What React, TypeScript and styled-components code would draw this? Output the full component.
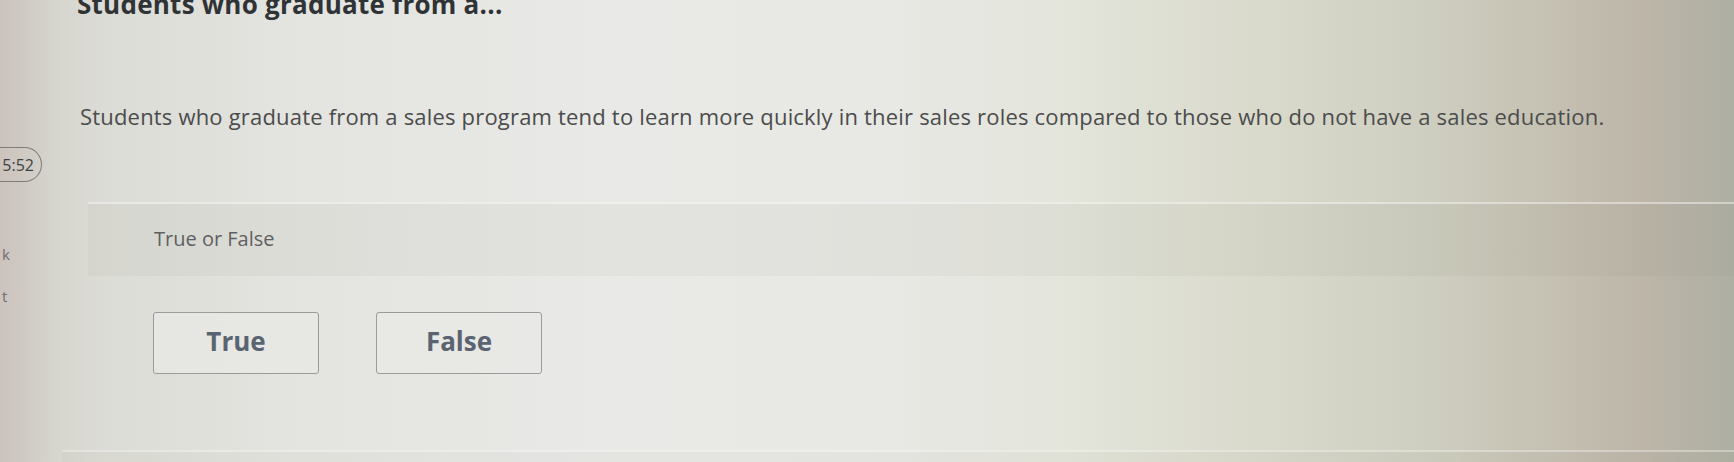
import React from 'react'
import styled, { createGlobalStyle } from 'styled-components'

const GlobalStyle = createGlobalStyle`
  html, body {
    margin: 0;
    padding: 0;
    height: 100%;
  }
  body {
    overflow: hidden;
    font-family: 'Open Sans', 'Liberation Sans', sans-serif;
    background: linear-gradient(
      90deg,
      #cfc8c2 0%,
      #d6d5ce 3%,
      #dcdcd6 6%,
      #e3e3df 16%,
      #e9e9e7 35%,
      #e8e8e4 52%,
      #e3e4da 62%,
      #dadbcd 72%,
      #cfcfc1 82%,
      #c4bfb1 90%,
      #bcb5a8 95%,
      #aeb0a3 100%
    );
  }
`

const Page = styled.div`
  display: flex;
  height: 462px;
  overflow: hidden;
`

const Rail = styled.aside`
  width: 62px;
  flex-shrink: 0;
  display: flex;
  flex-direction: column;
  padding-top: 147px;
  background: linear-gradient(90deg, rgba(190, 170, 165, 0.18), rgba(0, 0, 0, 0));
`

const Timer = styled.div`
  width: 46px;
  height: 35px;
  margin-left: -4px;
  box-sizing: border-box;
  border: 1.5px solid #7d7d7b;
  border-left: none;
  border-radius: 0 18px 18px 0;
  display: flex;
  align-items: center;
  justify-content: flex-end;
  padding-right: 7px;
  font-size: 16px;
  color: #3f4244;
`

const RailLink = styled.span<{ $gap: number }>`
  margin-top: ${p => p.$gap}px;
  padding-left: 2px;
  font-size: 15px;
  color: #6d6f70;
  line-height: 16px;
`

const Main = styled.main`
  flex: 1;
  display: flex;
  flex-direction: column;
`

const Title = styled.h1`
  margin: -11px 0 0 15px;
  font-size: 26px;
  font-weight: 700;
  line-height: 30px;
  color: #303335;
  letter-spacing: 0.25px;
  white-space: nowrap;
`

const Question = styled.p`
  margin: 82px 0 0 18px;
  font-size: 22px;
  line-height: 30px;
  color: #4b4c4c;
  letter-spacing: 0.19px;
  white-space: nowrap;
`

const Band = styled.div`
  margin: 71px 0 0 26px;
  height: 74px;
  box-sizing: border-box;
  display: flex;
  align-items: center;
  padding-left: 66px;
  background: rgba(120, 120, 100, 0.06);
  border-top: 2px solid rgba(255, 255, 255, 0.45);
`

const BandLabel = styled.span`
  font-size: 20px;
  color: #5e6061;
  margin-top: -4px;
`

const Choices = styled.div`
  display: flex;
  gap: 57px;
  margin: 36px 0 0 91px;
`

const Choice = styled.button`
  width: 166px;
  height: 62px;
  border: 1px solid #9a9c9c;
  border-radius: 3px;
  background: rgba(232, 232, 229, 0.75);
  font-family: 'Open Sans', 'Liberation Sans', sans-serif;
  font-size: 26px;
  font-weight: 700;
  color: #5a6470;
  cursor: pointer;
  padding: 0 0 4px;
`

const Footer = styled.div`
  margin-top: auto;
  height: 10px;
  border-top: 2px solid rgba(255, 255, 255, 0.35);
  background: rgba(120, 120, 100, 0.04);
`

export default function App() {
  return (
    <>
      <GlobalStyle />
      <Page>
        <Rail>
          <Timer>5:52</Timer>
          <RailLink $gap={64}>k</RailLink>
          <RailLink $gap={26}>t</RailLink>
        </Rail>
        <Main>
          <Title>Students who graduate from a...</Title>
          <Question>
            Students who graduate from a sales program tend to learn more quickly in their sales roles compared to those who do not have a sales education.
          </Question>
          <Band>
            <BandLabel>True or False</BandLabel>
          </Band>
          <Choices>
            <Choice>True</Choice>
            <Choice>False</Choice>
          </Choices>
          <Footer />
        </Main>
      </Page>
    </>
  )
}
